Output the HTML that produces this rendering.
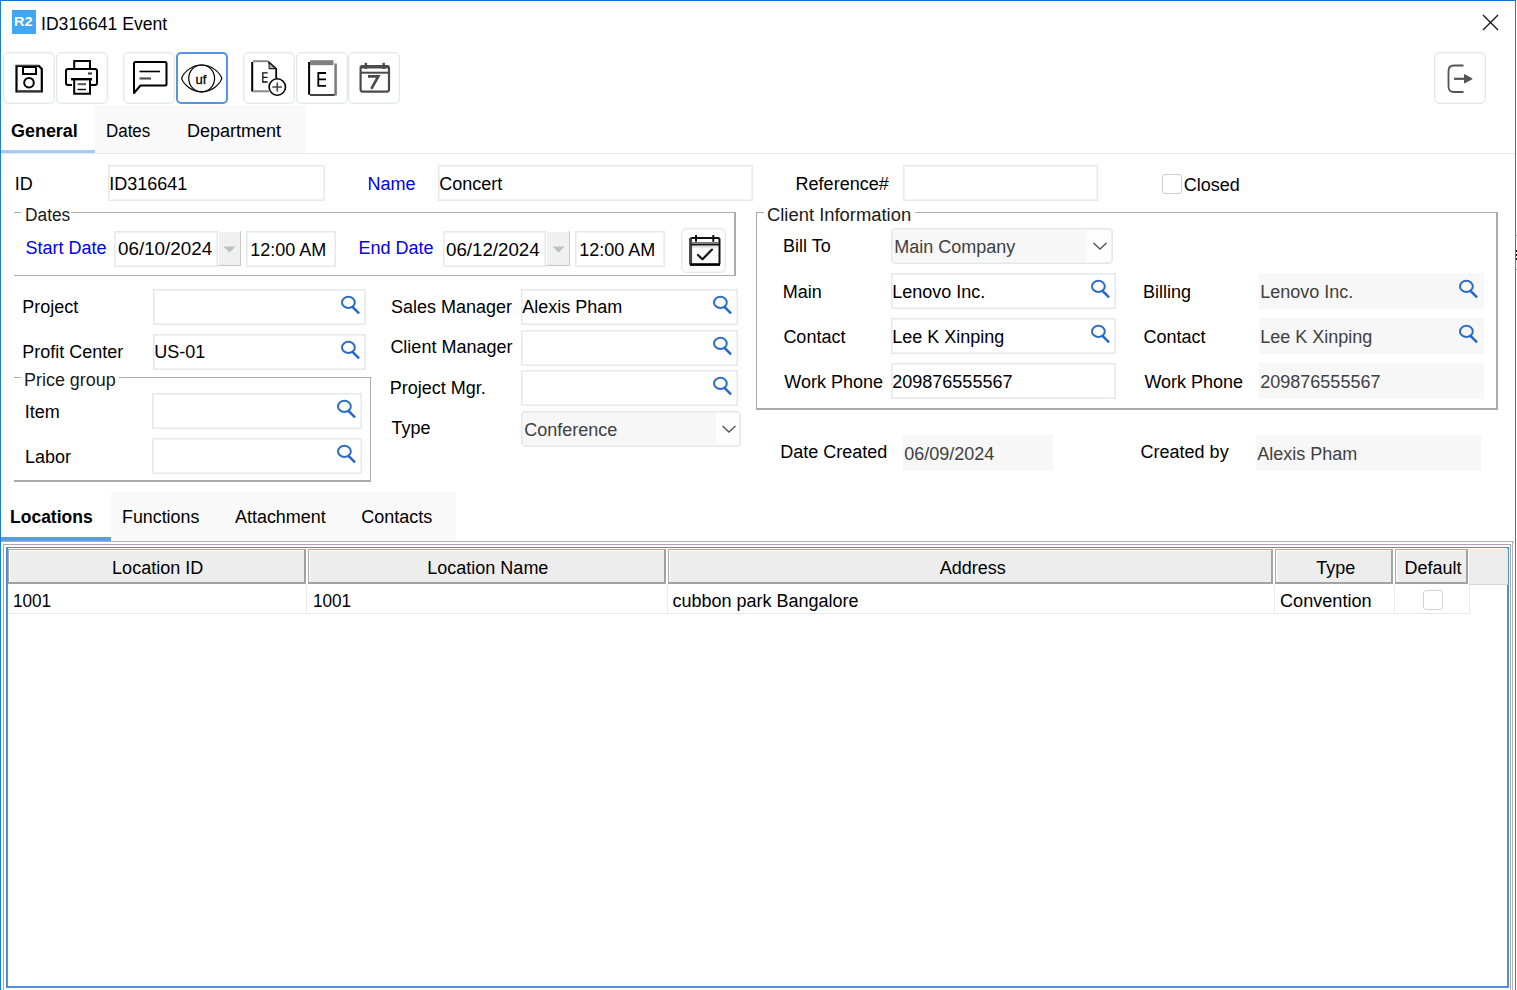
<!DOCTYPE html>
<html><head><meta charset="utf-8"><style>
html,body{margin:0;padding:0;}
body{width:1517px;height:990px;overflow:hidden;background:#fff;position:relative;font-family:"Liberation Sans",sans-serif;}
.t{position:absolute;white-space:nowrap;}
.b{position:absolute;}
</style></head><body>
<div class="b" style="left:0px;top:0px;width:1516px;height:1px;background:#0b74d4;"></div>
<div class="b" style="left:0px;top:0px;width:1px;height:990px;background:#1a7fd6;"></div>
<div class="b" style="left:1515px;top:0px;width:1px;height:990px;background:#1a84db;"></div>
<div class="b" style="left:1516px;top:235px;width:1px;height:1px;background:#aaa;"></div>
<div class="b" style="left:1516px;top:250px;width:1px;height:2px;background:#111;"></div>
<div class="b" style="left:1516px;top:254px;width:1px;height:2px;background:#111;"></div>
<div class="b" style="left:1516px;top:258px;width:1px;height:2px;background:#111;"></div>
<div class="b" style="left:1516px;top:269px;width:1px;height:1px;background:#aaa;"></div>
<div class="b" style="left:12px;top:10px;width:24px;height:24px;background:#3fa7f3;"></div>
<div class="t" style="left:14.23px;top:15.17px;font-size:13.5px;line-height:13.5px;color:#fff;font-weight:bold;transform:scaleX(1.0750);transform-origin:0 0;">R2</div>
<div class="t" style="left:40.58px;top:14.86px;font-size:18px;line-height:18px;color:#000;font-weight:normal;transform:scaleX(0.9780);transform-origin:0 0;">ID316641 Event</div>
<svg class="b" style="left:1482px;top:14px" width="17" height="17" viewBox="0 0 17 17"><path d="M1 1 L16 16 M16 1 L1 16" stroke="#111" stroke-width="1.3"/></svg>
<div class="b" style="left:3px;top:52px;width:52px;height:52px;border:1px solid #e6e8ec;box-shadow:inset 0 0 0 1px #f5f6f8;border-radius:5px;box-sizing:border-box;"></div>
<div class="b" style="left:56px;top:52px;width:52px;height:52px;border:1px solid #e6e8ec;box-shadow:inset 0 0 0 1px #f5f6f8;border-radius:5px;box-sizing:border-box;"></div>
<div class="b" style="left:123px;top:52px;width:52px;height:52px;border:1px solid #e6e8ec;box-shadow:inset 0 0 0 1px #f5f6f8;border-radius:5px;box-sizing:border-box;"></div>
<div class="b" style="left:176px;top:52px;width:52px;height:52px;border:2px solid #5394e3;border-radius:5px;box-sizing:border-box;"></div>
<div class="b" style="left:243px;top:52px;width:52px;height:52px;border:1px solid #e6e8ec;box-shadow:inset 0 0 0 1px #f5f6f8;border-radius:5px;box-sizing:border-box;"></div>
<div class="b" style="left:296px;top:52px;width:52px;height:52px;border:1px solid #e6e8ec;box-shadow:inset 0 0 0 1px #f5f6f8;border-radius:5px;box-sizing:border-box;"></div>
<div class="b" style="left:348px;top:52px;width:52px;height:52px;border:1px solid #e6e8ec;box-shadow:inset 0 0 0 1px #f5f6f8;border-radius:5px;box-sizing:border-box;"></div>
<div class="b" style="left:1434px;top:52px;width:52px;height:52px;border:1px solid #e6e8ec;box-shadow:inset 0 0 0 1px #f5f6f8;border-radius:5px;box-sizing:border-box;"></div>
<svg class="b" style="left:0;top:0" width="1517" height="110" viewBox="0 0 1517 110">
<!-- save -->
<g fill="none" stroke="#000">
<path d="M16.5 66 H39 L41.8 69 V91.5 H16.5 Z" stroke-width="2.2"/>
<path d="M16 65 H39" stroke="#888" stroke-width="1"/>
<path d="M17 91 H41.5" stroke="#444" stroke-width="1.5"/>
<rect x="23" y="67" width="13" height="7" stroke-width="2"/>
<circle cx="29" cy="82.7" r="4.8" stroke-width="2"/>
</g>
<!-- printer -->
<g fill="none" stroke="#000">
<path d="M74.2 68 V61 H90 V68" stroke-width="2"/>
<path d="M72 85 H68 Q66 85 66 83 V71 Q66 69 68 69 H95 Q97 69 97 71 V83 Q97 85 95 85 H91" stroke-width="2"/>
<path d="M71 79.2 H92" stroke-width="2.4"/>
<path d="M74.2 80 V93.8 H90 V80" stroke-width="2"/>
<path d="M77.5 84.2 H86" stroke="#555" stroke-width="2"/>
<path d="M77.5 89.5 H86" stroke-width="1.4"/>
<rect x="88" y="72.4" width="4" height="2.2" fill="#444" stroke="none"/>
</g>
<!-- comment -->
<g fill="none" stroke="#000">
<path d="M134 93 V63.5 Q134 62 135.5 62 H165 Q166.5 62 166.5 63.5 V84 Q166.5 85.5 165 85.5 H140.5 Z" stroke-width="2" stroke-linejoin="round"/>
<path d="M139.5 71.5 H160" stroke-width="1.6"/>
<path d="M139.5 78.5 H151" stroke="#444" stroke-width="2"/>
</g>
<!-- eye uf -->
<g fill="none" stroke="#000">
<ellipse cx="201.65" cy="78.4" rx="12.9" ry="13.4" stroke-width="1.2"/>
<path d="M181.6 78.4 C183.6 72.2, 192 65, 201.7 65 C211.4 65, 219.8 72.2, 221.8 78.4 C219.8 84.6, 211.4 91.8, 201.7 91.8 C192 91.8, 183.6 84.6, 181.6 78.4 Z" stroke-width="1.2"/>
</g>
<text x="195.6" y="83.8" font-family="Liberation Sans" font-size="13" fill="#000" stroke="#000" stroke-width="0.3">uf</text>
<!-- E+ doc -->
<g fill="none">
<path d="M252.2 62 V91.5" stroke="#000" stroke-width="2"/>
<path d="M253 61.2 H268.5" stroke="#888" stroke-width="2"/>
<path d="M253 91.3 H269" stroke="#888" stroke-width="2"/>
<path d="M268.5 62 L276.2 69 V78.5" stroke="#000" stroke-width="1.8"/>
<path d="M269 62.5 L275.5 68.6 H269.2 Z" fill="#bbb" stroke="#222" stroke-width="1.1"/>
<path d="M267.7 72.8 H262.8 V82 H267.7 M262.8 77.4 H267.5" stroke="#111" stroke-width="1.3"/>
<circle cx="277.3" cy="87" r="8.2" stroke="#000" stroke-width="1.6" fill="#fff"/>
<path d="M272.3 87 H282 M277.3 82.5 V91.5" stroke="#444" stroke-width="1.6"/>
</g>
<!-- E doc -->
<g fill="none">
<path d="M309.1 62 V94.7" stroke="#000" stroke-width="2"/>
<rect x="310" y="60.2" width="23.5" height="5" fill="#808080"/>
<path d="M335.6 63.5 V95.5" stroke="#7a7a7a" stroke-width="2.5"/>
<path d="M310 95 H334.5" stroke="#000" stroke-width="1.5"/>
<path d="M326 73 H318.3 V85.8 H326 M318.3 79.4 H326" stroke="#000" stroke-width="1.8"/>
</g>
<!-- calendar 7 -->
<g fill="none" stroke="#4a4a4a">
<rect x="360.6" y="66" width="28.4" height="25.6" rx="2" stroke-width="2.2"/>
<path d="M361 67 H388.5" stroke-width="3"/>
<path d="M361 72.7 H388.5" stroke-width="2"/>
<path d="M365.9 62.8 V69 M383.7 62.8 V69" stroke-width="2.4"/>
<path d="M368 76.3 H378.3 L371.3 88.8" stroke-width="2.7"/>
</g>
<!-- exit -->
<g fill="none" stroke="#555">
<path d="M1463.5 65.5 H1454 Q1448.5 65.5 1448.5 71 V86.5 Q1448.5 92 1454 92 H1463.5" stroke-width="1.8"/>
<path d="M1454 78.8 H1466" stroke-width="2.2"/>
<path d="M1464.5 74.6 L1472.2 78.8 L1464.5 83 Z" fill="#555" stroke="#555" stroke-width="1" stroke-linejoin="round"/>
</g>
</svg>
<div class="b" style="left:95px;top:105px;width:211px;height:48px;background:#f9f9f9;"></div>
<div class="b" style="left:1px;top:153px;width:1514px;height:1px;background:#e6e8ec;"></div>
<div class="b" style="left:1px;top:150px;width:94px;height:3px;background:#a9c9f0;"></div>
<div class="t" style="left:10.86px;top:121.66px;font-size:18px;line-height:18px;color:#000;font-weight:bold;transform:scaleX(0.9966);transform-origin:0 0;">General</div>
<div class="t" style="left:106.21px;top:121.66px;font-size:18px;line-height:18px;color:#000;font-weight:normal;transform:scaleX(0.9400);transform-origin:0 0;">Dates</div>
<div class="t" style="left:186.92px;top:121.66px;font-size:18px;line-height:18px;color:#000;font-weight:normal;">Department</div>
<div class="t" style="left:14.64px;top:174.56px;font-size:18px;line-height:18px;color:#000;font-weight:normal;">ID</div>
<div class="b" style="left:108px;top:165px;width:217px;height:36px;border:1px solid #e6e8eb;box-shadow:inset 0 0 0 1px #f1f2f4;box-sizing:border-box;background:#fff;"></div>
<div class="t" style="left:109.30px;top:174.76px;font-size:18px;line-height:18px;color:#000;font-weight:normal;">ID316641</div>
<div class="t" style="left:367.52px;top:174.86px;font-size:18px;line-height:18px;color:#0000f0;font-weight:normal;">Name</div>
<div class="b" style="left:438px;top:165px;width:315px;height:36px;border:1px solid #e6e8eb;box-shadow:inset 0 0 0 1px #f1f2f4;box-sizing:border-box;background:#fff;"></div>
<div class="t" style="left:439.30px;top:174.76px;font-size:18px;line-height:18px;color:#000;font-weight:normal;">Concert</div>
<div class="t" style="left:795.62px;top:174.76px;font-size:18px;line-height:18px;color:#000;font-weight:normal;">Reference#</div>
<div class="b" style="left:903px;top:165px;width:195px;height:36px;border:1px solid #e6e8eb;box-shadow:inset 0 0 0 1px #f1f2f4;box-sizing:border-box;background:#fff;"></div>
<div class="b" style="left:1162px;top:174px;width:20px;height:20px;border:1px solid #cfcfcf;border-radius:3px;box-sizing:border-box;"></div>
<div class="t" style="left:1183.79px;top:175.66px;font-size:18px;line-height:18px;color:#000;font-weight:normal;">Closed</div>
<div class="b" style="left:14px;top:212px;width:7px;height:1px;background:#ababab;"></div>
<div class="b" style="left:71px;top:212px;width:665px;height:1px;background:#ababab;"></div>
<div class="b" style="left:734px;top:212px;width:2px;height:64px;background:#ababab;"></div>
<div class="b" style="left:14px;top:275px;width:722px;height:1px;background:#ababab;"></div>
<div class="t" style="left:24.58px;top:205.56px;font-size:18px;line-height:18px;color:#1a1a1a;font-weight:normal;transform:scaleX(0.9623);transform-origin:0 0;">Dates</div>
<div class="t" style="left:25.48px;top:238.76px;font-size:18px;line-height:18px;color:#0000f0;font-weight:normal;">Start Date</div>
<div class="b" style="left:114px;top:231px;width:104px;height:36px;border:1px solid #e6e8eb;box-shadow:inset 0 0 0 1px #f1f2f4;box-sizing:border-box;background:#fff;"></div>
<div class="t" style="left:117.77px;top:240.46px;font-size:18px;line-height:18px;color:#000;font-weight:normal;transform:scaleX(1.0444);transform-origin:0 0;">06/10/2024</div>
<div class="b" style="left:218px;top:231px;width:23px;height:35px;background:#f0f0f0;border-right:1px solid #c6c8ce;border-bottom:1px solid #c6c8ce;box-sizing:border-box;box-shadow:inset 1px 1px 0 #fff;"></div>
<svg class="b" style="left:223.3px;top:246px" width="13" height="7" viewBox="0 0 13 7"><path d="M0.5 0.5 L12.5 0.5 L6.5 6.5 Z" fill="#bcbfc8"/></svg>
<div class="b" style="left:246px;top:231px;width:90px;height:36px;border:1px solid #e6e8eb;box-shadow:inset 0 0 0 1px #f1f2f4;box-sizing:border-box;background:#fff;"></div>
<div class="t" style="left:250.13px;top:240.56px;font-size:18px;line-height:18px;color:#000;font-weight:normal;">12:00 AM</div>
<div class="t" style="left:358.42px;top:238.76px;font-size:18px;line-height:18px;color:#0000f0;font-weight:normal;">End Date</div>
<div class="b" style="left:443px;top:231px;width:103px;height:36px;border:1px solid #e6e8eb;box-shadow:inset 0 0 0 1px #f1f2f4;box-sizing:border-box;background:#fff;"></div>
<div class="t" style="left:445.87px;top:240.76px;font-size:18px;line-height:18px;color:#000;font-weight:normal;transform:scaleX(1.0399);transform-origin:0 0;">06/12/2024</div>
<div class="b" style="left:546px;top:231px;width:24px;height:35px;background:#f0f0f0;border-right:1px solid #c6c8ce;border-bottom:1px solid #c6c8ce;box-sizing:border-box;box-shadow:inset 1px 1px 0 #fff;"></div>
<svg class="b" style="left:551.8px;top:246px" width="13" height="7" viewBox="0 0 13 7"><path d="M0.5 0.5 L12.5 0.5 L6.5 6.5 Z" fill="#bcbfc8"/></svg>
<div class="b" style="left:575px;top:231px;width:90px;height:36px;border:1px solid #e6e8eb;box-shadow:inset 0 0 0 1px #f1f2f4;box-sizing:border-box;background:#fff;"></div>
<div class="t" style="left:579.13px;top:240.56px;font-size:18px;line-height:18px;color:#000;font-weight:normal;">12:00 AM</div>
<div class="b" style="left:681px;top:228px;width:45px;height:45px;border:1px solid #e6e8ec;box-shadow:inset 0 0 0 1px #f5f6f8;border-radius:5px;box-sizing:border-box;"></div>
<svg class="b" style="left:0;top:220px" width="760" height="60" viewBox="0 220 760 60">
<g fill="none" stroke="#111">
<rect x="690.5" y="238" width="29" height="26.6" rx="1.5" stroke-width="2"/>
<path d="M690.6 238.2 V264.5" stroke="#444" stroke-width="3"/>
<path d="M691 244.5 H719" stroke-width="2"/>
<path d="M691 242.6 H719" stroke="#777" stroke-width="1.2"/>
<path d="M692 246.9 H718" stroke="#c4c4c4" stroke-width="1"/>
<path d="M690 264.6 H720" stroke="#000" stroke-width="2.4"/>
<path d="M696 235 V241.8 M713.3 235 V241.8" stroke-width="2"/>
<path d="M698 255 L702.5 259.2 L712 249.6" stroke-width="2.2" stroke-linecap="round" stroke-linejoin="round"/>
</g>
</svg>
<div class="b" style="left:756px;top:212px;width:8px;height:1px;background:#ababab;"></div>
<div class="b" style="left:915px;top:212px;width:583px;height:1px;background:#ababab;"></div>
<div class="b" style="left:1496px;top:212px;width:2px;height:198px;background:#ababab;"></div>
<div class="b" style="left:756px;top:408px;width:742px;height:2px;background:#ababab;"></div>
<div class="b" style="left:756px;top:212px;width:1px;height:198px;background:#ababab;"></div>
<div class="t" style="left:766.67px;top:205.66px;font-size:18px;line-height:18px;color:#1a1a1a;font-weight:normal;transform:scaleX(1.0217);transform-origin:0 0;">Client Information</div>
<div class="t" style="left:783.12px;top:237.46px;font-size:18px;line-height:18px;color:#000;font-weight:normal;">Bill To</div>
<div class="b" style="left:891px;top:228px;width:222px;height:36px;border:1px solid #e4e6ea;box-shadow:inset 0 0 0 1px #eef0f2;border-radius:4px;box-sizing:border-box;background:#f7f7f7;"></div>
<div class="b" style="left:1087px;top:230px;width:24px;height:32px;background:#fdfdfd;border-radius:0 2px 2px 0;"></div>
<div class="t" style="left:894.20px;top:237.96px;font-size:18px;line-height:18px;color:#404040;font-weight:normal;">Main Company</div>
<svg class="b" style="left:1092.0px;top:241.0px" width="16" height="10" viewBox="0 0 16 10"><path d="M1.5 2 L8 8 L14.5 2" fill="none" stroke="#555" stroke-width="1.4"/></svg>
<div class="t" style="left:782.82px;top:283.06px;font-size:18px;line-height:18px;color:#000;font-weight:normal;">Main</div>
<div class="b" style="left:891px;top:273px;width:225px;height:36px;border:1px solid #e6e8eb;box-shadow:inset 0 0 0 1px #f1f2f4;box-sizing:border-box;background:#fff;"></div>
<div class="t" style="left:892.30px;top:282.76px;font-size:18px;line-height:18px;color:#000;font-weight:normal;">Lenovo Inc.</div>
<svg class="b" style="left:1091px;top:278px" width="20" height="21" viewBox="0 0 20 21"><ellipse cx="7.4" cy="8.4" rx="6.4" ry="5.6" fill="none" stroke="#2a6cc8" stroke-width="2"/><path d="M11.8 13.2 L17.2 18.6" stroke="#2466c6" stroke-width="2.4" stroke-linecap="square"/></svg>
<div class="t" style="left:783.39px;top:327.96px;font-size:18px;line-height:18px;color:#000;font-weight:normal;">Contact</div>
<div class="b" style="left:891px;top:318px;width:225px;height:36px;border:1px solid #e6e8eb;box-shadow:inset 0 0 0 1px #f1f2f4;box-sizing:border-box;background:#fff;"></div>
<div class="t" style="left:892.30px;top:327.76px;font-size:18px;line-height:18px;color:#000;font-weight:normal;">Lee K Xinping</div>
<svg class="b" style="left:1091px;top:323px" width="20" height="21" viewBox="0 0 20 21"><ellipse cx="7.4" cy="8.4" rx="6.4" ry="5.6" fill="none" stroke="#2a6cc8" stroke-width="2"/><path d="M11.8 13.2 L17.2 18.6" stroke="#2466c6" stroke-width="2.4" stroke-linecap="square"/></svg>
<div class="t" style="left:784.22px;top:372.56px;font-size:18px;line-height:18px;color:#000;font-weight:normal;">Work Phone</div>
<div class="b" style="left:891px;top:363px;width:225px;height:36px;border:1px solid #e6e8eb;box-shadow:inset 0 0 0 1px #f1f2f4;box-sizing:border-box;background:#fff;"></div>
<div class="t" style="left:892.30px;top:372.76px;font-size:18px;line-height:18px;color:#000;font-weight:normal;">209876555567</div>
<div class="t" style="left:1143.02px;top:283.06px;font-size:18px;line-height:18px;color:#000;font-weight:normal;">Billing</div>
<div class="b" style="left:1259px;top:273px;width:225px;height:36px;background:#f7f7f7;"></div>
<div class="t" style="left:1260.30px;top:282.76px;font-size:18px;line-height:18px;color:#404040;font-weight:normal;">Lenovo Inc.</div>
<svg class="b" style="left:1459px;top:278px" width="20" height="21" viewBox="0 0 20 21"><ellipse cx="7.4" cy="8.4" rx="6.4" ry="5.6" fill="none" stroke="#2a6cc8" stroke-width="2"/><path d="M11.8 13.2 L17.2 18.6" stroke="#2466c6" stroke-width="2.4" stroke-linecap="square"/></svg>
<div class="t" style="left:1143.59px;top:327.96px;font-size:18px;line-height:18px;color:#000;font-weight:normal;">Contact</div>
<div class="b" style="left:1259px;top:318px;width:225px;height:36px;background:#f7f7f7;"></div>
<div class="t" style="left:1260.30px;top:327.76px;font-size:18px;line-height:18px;color:#404040;font-weight:normal;">Lee K Xinping</div>
<svg class="b" style="left:1459px;top:323px" width="20" height="21" viewBox="0 0 20 21"><ellipse cx="7.4" cy="8.4" rx="6.4" ry="5.6" fill="none" stroke="#2a6cc8" stroke-width="2"/><path d="M11.8 13.2 L17.2 18.6" stroke="#2466c6" stroke-width="2.4" stroke-linecap="square"/></svg>
<div class="t" style="left:1144.42px;top:372.56px;font-size:18px;line-height:18px;color:#000;font-weight:normal;">Work Phone</div>
<div class="b" style="left:1259px;top:363px;width:225px;height:36px;background:#f7f7f7;"></div>
<div class="t" style="left:1260.30px;top:372.76px;font-size:18px;line-height:18px;color:#404040;font-weight:normal;">209876555567</div>
<div class="t" style="left:22.32px;top:297.96px;font-size:18px;line-height:18px;color:#000;font-weight:normal;">Project</div>
<div class="b" style="left:153px;top:289px;width:213px;height:36px;border:1px solid #e6e8eb;box-shadow:inset 0 0 0 1px #f1f2f4;box-sizing:border-box;background:#fff;"></div>
<svg class="b" style="left:341px;top:294px" width="20" height="21" viewBox="0 0 20 21"><ellipse cx="7.4" cy="8.4" rx="6.4" ry="5.6" fill="none" stroke="#2a6cc8" stroke-width="2"/><path d="M11.8 13.2 L17.2 18.6" stroke="#2466c6" stroke-width="2.4" stroke-linecap="square"/></svg>
<div class="t" style="left:22.32px;top:342.76px;font-size:18px;line-height:18px;color:#000;font-weight:normal;">Profit Center</div>
<div class="b" style="left:153px;top:334px;width:213px;height:36px;border:1px solid #e6e8eb;box-shadow:inset 0 0 0 1px #f1f2f4;box-sizing:border-box;background:#fff;"></div>
<div class="t" style="left:154.30px;top:342.76px;font-size:18px;line-height:18px;color:#000;font-weight:normal;">US-01</div>
<svg class="b" style="left:341px;top:339px" width="20" height="21" viewBox="0 0 20 21"><ellipse cx="7.4" cy="8.4" rx="6.4" ry="5.6" fill="none" stroke="#2a6cc8" stroke-width="2"/><path d="M11.8 13.2 L17.2 18.6" stroke="#2466c6" stroke-width="2.4" stroke-linecap="square"/></svg>
<div class="b" style="left:14px;top:377px;width:7px;height:1px;background:#ababab;"></div>
<div class="b" style="left:119px;top:377px;width:252px;height:1px;background:#ababab;"></div>
<div class="b" style="left:370px;top:377px;width:1px;height:105px;background:#ababab;"></div>
<div class="b" style="left:14px;top:480px;width:357px;height:2px;background:#ababab;"></div>
<div class="t" style="left:24.33px;top:370.56px;font-size:18px;line-height:18px;color:#1a1a1a;font-weight:normal;transform:scaleX(0.9965);transform-origin:0 0;">Price group</div>
<div class="t" style="left:24.64px;top:402.56px;font-size:18px;line-height:18px;color:#000;font-weight:normal;">Item</div>
<div class="b" style="left:152px;top:393px;width:210px;height:36px;border:1px solid #e6e8eb;box-shadow:inset 0 0 0 1px #f1f2f4;box-sizing:border-box;background:#fff;"></div>
<svg class="b" style="left:337px;top:398px" width="20" height="21" viewBox="0 0 20 21"><ellipse cx="7.4" cy="8.4" rx="6.4" ry="5.6" fill="none" stroke="#2a6cc8" stroke-width="2"/><path d="M11.8 13.2 L17.2 18.6" stroke="#2466c6" stroke-width="2.4" stroke-linecap="square"/></svg>
<div class="t" style="left:25.02px;top:447.76px;font-size:18px;line-height:18px;color:#000;font-weight:normal;">Labor</div>
<div class="b" style="left:152px;top:438px;width:210px;height:36px;border:1px solid #e6e8eb;box-shadow:inset 0 0 0 1px #f1f2f4;box-sizing:border-box;background:#fff;"></div>
<svg class="b" style="left:337px;top:443px" width="20" height="21" viewBox="0 0 20 21"><ellipse cx="7.4" cy="8.4" rx="6.4" ry="5.6" fill="none" stroke="#2a6cc8" stroke-width="2"/><path d="M11.8 13.2 L17.2 18.6" stroke="#2466c6" stroke-width="2.4" stroke-linecap="square"/></svg>
<div class="t" style="left:390.88px;top:297.96px;font-size:18px;line-height:18px;color:#000;font-weight:normal;">Sales Manager</div>
<div class="b" style="left:521px;top:289px;width:217px;height:36px;border:1px solid #e6e8eb;box-shadow:inset 0 0 0 1px #f1f2f4;box-sizing:border-box;background:#fff;"></div>
<div class="t" style="left:522.30px;top:297.76px;font-size:18px;line-height:18px;color:#000;font-weight:normal;">Alexis Pham</div>
<svg class="b" style="left:713px;top:294px" width="20" height="21" viewBox="0 0 20 21"><ellipse cx="7.4" cy="8.4" rx="6.4" ry="5.6" fill="none" stroke="#2a6cc8" stroke-width="2"/><path d="M11.8 13.2 L17.2 18.6" stroke="#2466c6" stroke-width="2.4" stroke-linecap="square"/></svg>
<div class="t" style="left:390.39px;top:337.96px;font-size:18px;line-height:18px;color:#000;font-weight:normal;">Client Manager</div>
<div class="b" style="left:521px;top:330px;width:217px;height:36px;border:1px solid #e6e8eb;box-shadow:inset 0 0 0 1px #f1f2f4;box-sizing:border-box;background:#fff;"></div>
<svg class="b" style="left:713px;top:335px" width="20" height="21" viewBox="0 0 20 21"><ellipse cx="7.4" cy="8.4" rx="6.4" ry="5.6" fill="none" stroke="#2a6cc8" stroke-width="2"/><path d="M11.8 13.2 L17.2 18.6" stroke="#2466c6" stroke-width="2.4" stroke-linecap="square"/></svg>
<div class="t" style="left:389.82px;top:378.76px;font-size:18px;line-height:18px;color:#000;font-weight:normal;">Project Mgr.</div>
<div class="b" style="left:521px;top:370px;width:217px;height:36px;border:1px solid #e6e8eb;box-shadow:inset 0 0 0 1px #f1f2f4;box-sizing:border-box;background:#fff;"></div>
<svg class="b" style="left:713px;top:375px" width="20" height="21" viewBox="0 0 20 21"><ellipse cx="7.4" cy="8.4" rx="6.4" ry="5.6" fill="none" stroke="#2a6cc8" stroke-width="2"/><path d="M11.8 13.2 L17.2 18.6" stroke="#2466c6" stroke-width="2.4" stroke-linecap="square"/></svg>
<div class="t" style="left:391.60px;top:419.06px;font-size:18px;line-height:18px;color:#000;font-weight:normal;">Type</div>
<div class="b" style="left:521px;top:411px;width:220px;height:36px;border:1px solid #e4e6ea;box-shadow:inset 0 0 0 1px #eef0f2;border-radius:4px;box-sizing:border-box;background:#f7f7f7;"></div>
<div class="b" style="left:716px;top:413px;width:23px;height:32px;background:#fdfdfd;border-radius:0 2px 2px 0;"></div>
<div class="t" style="left:524.20px;top:420.76px;font-size:18px;line-height:18px;color:#404040;font-weight:normal;">Conference</div>
<svg class="b" style="left:720.5px;top:424.0px" width="16" height="10" viewBox="0 0 16 10"><path d="M1.5 2 L8 8 L14.5 2" fill="none" stroke="#555" stroke-width="1.4"/></svg>
<div class="t" style="left:780.32px;top:442.76px;font-size:18px;line-height:18px;color:#000;font-weight:normal;">Date Created</div>
<div class="b" style="left:903px;top:435px;width:150px;height:36px;background:#f7f7f7;"></div>
<div class="t" style="left:904.30px;top:444.76px;font-size:18px;line-height:18px;color:#404040;font-weight:normal;">06/09/2024</div>
<div class="t" style="left:1140.59px;top:442.76px;font-size:18px;line-height:18px;color:#000;font-weight:normal;">Created by</div>
<div class="b" style="left:1256px;top:435px;width:225px;height:36px;background:#f7f7f7;"></div>
<div class="t" style="left:1257.30px;top:444.76px;font-size:18px;line-height:18px;color:#404040;font-weight:normal;">Alexis Pham</div>
<div class="b" style="left:111px;top:492px;width:345px;height:49px;background:#f9f9f9;"></div>
<div class="b" style="left:1px;top:541px;width:1513px;height:1px;background:#b0b0b0;"></div>
<div class="b" style="left:1px;top:537px;width:110px;height:4px;background:#5a9ee6;"></div>
<div class="t" style="left:10.33px;top:508.46px;font-size:18px;line-height:18px;color:#000;font-weight:bold;transform:scaleX(0.9727);transform-origin:0 0;">Locations</div>
<div class="t" style="left:121.74px;top:508.46px;font-size:18px;line-height:18px;color:#000;font-weight:normal;transform:scaleX(0.9906);transform-origin:0 0;">Functions</div>
<div class="t" style="left:235.26px;top:508.46px;font-size:18px;line-height:18px;color:#000;font-weight:normal;transform:scaleX(0.9958);transform-origin:0 0;">Attachment</div>
<div class="t" style="left:361.29px;top:508.46px;font-size:18px;line-height:18px;color:#000;font-weight:normal;">Contacts</div>
<div class="b" style="left:1512px;top:541px;width:1px;height:449px;background:#b0b0b0;"></div>
<div class="b" style="left:3px;top:544px;width:1508px;height:446px;border-top:1px solid #a8a8a8;border-left:1px solid #a8a8a8;border-right:1px solid #a8a8a8;box-sizing:border-box;"></div>
<div class="b" style="left:6px;top:547px;width:1503px;height:441px;border:2px solid #4f8fd9;border-top:1px solid #4f8fd9;box-sizing:border-box;"></div>
<div class="b" style="left:8px;top:549px;width:1500px;height:36px;background:#fff;"></div>
<div class="b" style="left:1469px;top:549px;width:39px;height:36px;background:#ececec;border-bottom:1px solid #d6d6d6;box-sizing:border-box;"></div>
<div class="b" style="left:8px;top:549px;width:298px;height:35px;background:#ededed;border-top:1px solid #a8a8a8;border-left:1px solid #a8a8a8;border-right:2px solid #a2a2a2;border-bottom:2px solid #a2a2a2;box-sizing:border-box;box-shadow:inset 1px 1px 0 #fff;"></div>
<div class="t" style="left:112.12px;top:558.76px;font-size:18px;line-height:18px;color:#000;font-weight:normal;">Location ID</div>
<div class="b" style="left:308px;top:549px;width:358px;height:35px;background:#ededed;border-top:1px solid #a8a8a8;border-left:1px solid #a8a8a8;border-right:2px solid #a2a2a2;border-bottom:2px solid #a2a2a2;box-sizing:border-box;box-shadow:inset 1px 1px 0 #fff;"></div>
<div class="t" style="left:427.32px;top:558.76px;font-size:18px;line-height:18px;color:#000;font-weight:normal;">Location Name</div>
<div class="b" style="left:668px;top:549px;width:605px;height:35px;background:#ededed;border-top:1px solid #a8a8a8;border-left:1px solid #a8a8a8;border-right:2px solid #a2a2a2;border-bottom:2px solid #a2a2a2;box-sizing:border-box;box-shadow:inset 1px 1px 0 #fff;"></div>
<div class="t" style="left:939.66px;top:558.76px;font-size:18px;line-height:18px;color:#000;font-weight:normal;">Address</div>
<div class="b" style="left:1275px;top:549px;width:118px;height:35px;background:#ededed;border-top:1px solid #a8a8a8;border-left:1px solid #a8a8a8;border-right:2px solid #a2a2a2;border-bottom:2px solid #a2a2a2;box-sizing:border-box;box-shadow:inset 1px 1px 0 #fff;"></div>
<div class="t" style="left:1316.30px;top:558.76px;font-size:18px;line-height:18px;color:#000;font-weight:normal;">Type</div>
<div class="b" style="left:1395px;top:549px;width:73px;height:35px;background:#ededed;border-top:1px solid #a8a8a8;border-left:1px solid #a8a8a8;border-right:2px solid #a2a2a2;border-bottom:2px solid #a2a2a2;box-sizing:border-box;box-shadow:inset 1px 1px 0 #fff;"></div>
<div class="t" style="left:1404.52px;top:558.76px;font-size:18px;line-height:18px;color:#000;font-weight:normal;">Default</div>
<div class="b" style="left:8px;top:613px;width:1461px;height:1px;background:#e8e8e8;"></div>
<div class="b" style="left:306px;top:585px;width:1px;height:29px;background:#ebebeb;"></div>
<div class="b" style="left:667px;top:585px;width:1px;height:29px;background:#ebebeb;"></div>
<div class="b" style="left:1274px;top:585px;width:1px;height:29px;background:#ebebeb;"></div>
<div class="b" style="left:1394px;top:585px;width:1px;height:29px;background:#ebebeb;"></div>
<div class="b" style="left:1469px;top:585px;width:1px;height:29px;background:#ebebeb;"></div>
<div class="t" style="left:13.19px;top:591.56px;font-size:18px;line-height:18px;color:#000;font-weight:normal;transform:scaleX(0.9526);transform-origin:0 0;">1001</div>
<div class="t" style="left:313.49px;top:591.56px;font-size:18px;line-height:18px;color:#000;font-weight:normal;transform:scaleX(0.9526);transform-origin:0 0;">1001</div>
<div class="t" style="left:672.44px;top:591.56px;font-size:18px;line-height:18px;color:#000;font-weight:normal;">cubbon park Bangalore</div>
<div class="t" style="left:1279.58px;top:591.56px;font-size:18px;line-height:18px;color:#000;font-weight:normal;transform:scaleX(1.0058);transform-origin:0 0;">Convention</div>
<div class="b" style="left:1423px;top:590px;width:20px;height:20px;border:1.5px solid #d4d4d4;border-radius:3px;box-sizing:border-box;"></div>
</body></html>
